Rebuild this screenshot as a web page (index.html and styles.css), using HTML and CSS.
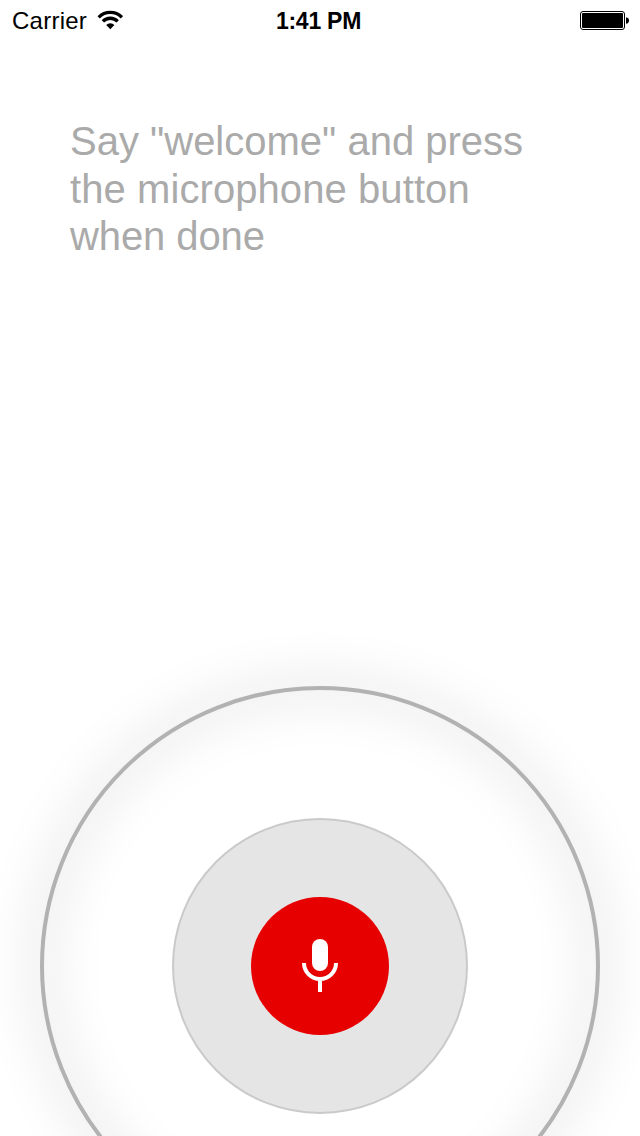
FILE: index.html
```html
<!DOCTYPE html>
<html lang="en">
<head>
<meta charset="utf-8">
<title>Voice recording</title>
<link rel="stylesheet" href="styles.css">
</head>
<body>
<main class="screen">
  <header class="status">
    <div class="status-left">
      <span class="carrier">Carrier</span>
      <svg class="wifi" width="26" height="20" viewBox="0 0 26 20" aria-hidden="true">
        <g fill="none" stroke="#000" stroke-width="3.3">
          <path d="M1.700 7.300A16 16 0 0 1 24.900 7.300"/>
          <path d="M5.900 11.400A10.300 10.300 0 0 1 20.700 11.400"/>
        </g>
        <path d="M9.200 15a5.700 5.700 0 0 1 8.200 0L13.300 19.300z"/>
      </svg>
    </div>
    <time class="time">1:41 PM</time>
    <svg class="battery" width="50" height="20" viewBox="0 0 50 20" aria-hidden="true">
      <rect x=".5" y=".5" width="44" height="18" rx="2.5" fill="none" stroke="#000"/>
      <rect x="2" y="2" width="41" height="15" rx="1"/>
      <path d="M46 6.200c2 .3 3 1.500 3 3.300s-1 3-3 3.300z"/>
    </svg>
  </header>
  <p class="prompt">
    <span class="line line-first">Say "welcome" and press</span>
    <span class="line line-second">the microphone button</span>
    <span class="line line-last">when done</span>
  </p>
  <svg class="recorder" width="640" height="536" viewBox="0 600 640 536" role="img" aria-label="Microphone button">
    <defs>
      <filter id="glow" filterUnits="userSpaceOnUse" x="-100" y="540" width="840" height="860">
        <feGaussianBlur stdDeviation="24"/>
      </filter>
    </defs>
    <circle cx="320" cy="966" r="278" fill="none" stroke="#000" stroke-opacity=".19" stroke-width="12" filter="url(#glow)"/>
    <circle cx="320" cy="966" r="278" fill="none" stroke="#b2b2b2" stroke-width="4"/>
    <circle cx="320" cy="966" r="147" fill="#e5e5e5" stroke="#cacaca" stroke-width="2"/>
    <circle cx="320" cy="966" r="69" fill="#e60000"/>
    <rect x="312" y="939" width="16" height="32" rx="8" fill="#fff"/>
    <path d="M304 963a16 16 0 0 0 32 0M320 979v13" fill="none" stroke="#fff" stroke-width="4"/>
  </svg>
</main>
</body>
</html>
```
FILE: styles.css
```css
* { box-sizing: border-box; }
body {
  margin: 0;
  background: #fff;
  font-family: "Liberation Sans", Arial, sans-serif;
}
.screen {
  width: 640px;
  height: 1136px;
  display: flex;
  flex-direction: column;
  justify-content: space-between;
  overflow: hidden;
}
.status {
  flex: none;
  height: 40px;
  display: grid;
  grid-template-columns: 1fr auto 1fr;
  align-items: center;
  padding: 0 10px 0 12px;
  color: #000;
  font-size: 24px;
}
.status-left {
  display: flex;
  align-items: center;
  gap: 10px;
}
.carrier { letter-spacing: 0.25px; padding-top: 2px; }
.wifi { display: block; }
.time {
  margin-right: 5px;
  padding-top: 2px;
  font-weight: bold;
  font-size: 23px;
  letter-spacing: -0.25px;
}
.battery { justify-self: end; display: block; margin-top: 2px; }
.prompt {
  flex: none;
  margin: 78px 70px auto;
  display: flex;
  flex-direction: column;
  color: #aaa;
  font-size: 40px;
  line-height: 47.5px;
}
.line { white-space: nowrap; }
.line-second { letter-spacing: 0.08px; }
.line-last { letter-spacing: -0.1px; }
.recorder { flex: none; display: block; }
```
